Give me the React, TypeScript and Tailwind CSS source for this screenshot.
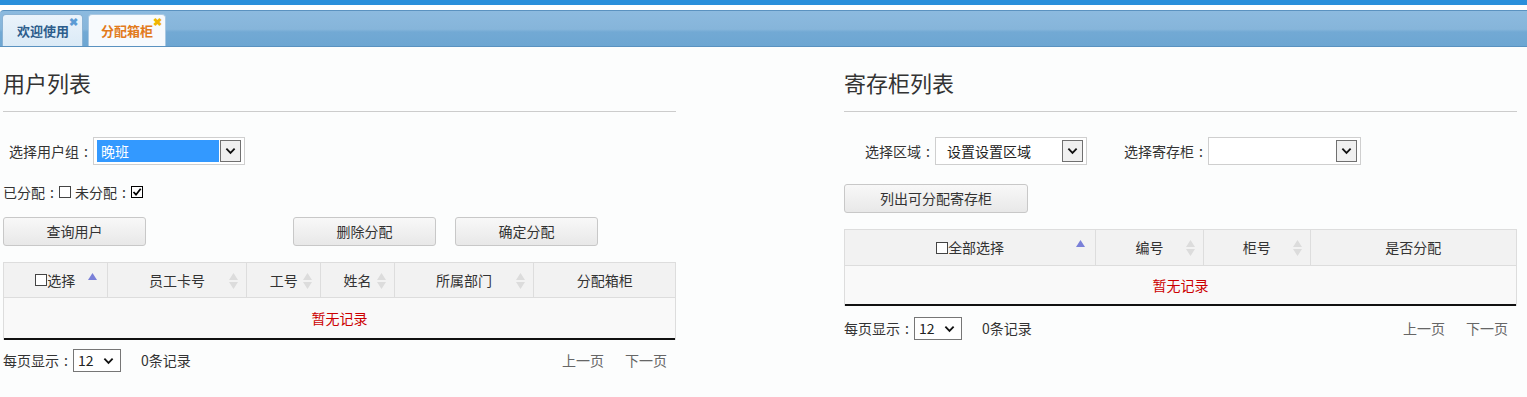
import React from 'react';

const font = { fontFamily: '"Noto Sans CJK SC", "Noto Sans", sans-serif' };

// 全角冒号居中显示
function Colon() {
  return <span className="inline-block w-[14px] text-center">:</span>;
}

function Chevron() {
  return (
    <svg viewBox="0 0 12 8" width="11" height="8">
      <path d="M1.5 1.5L6 6l4.5-4.5" fill="none" stroke="#111" strokeWidth={2} />
    </svg>
  );
}

function SortIcon({ active }: { active?: boolean }) {
  if (active) {
    return (
      <svg width="9" height="8" viewBox="0 0 9 8" className="absolute right-[10px] top-[10px]">
        <path d="M4.5 0L9 7H0z" fill="#7a80d8" />
      </svg>
    );
  }
  return (
    <svg width="9" height="16" viewBox="0 0 9 16" className="absolute right-[8px] top-[10px]">
      <path d="M4.5 0L9 7H0z" fill="#dcdcdc" />
      <path d="M0 9h9l-4.5 7z" fill="#dcdcdc" />
    </svg>
  );
}

function Box({ checked }: { checked?: boolean }) {
  return (
    <span
      className={`inline-flex items-center justify-center w-[12px] h-[12px] border ${
        checked ? 'border-black' : 'border-[#444]'
      } bg-white align-middle`}
    >
      {checked && (
        <svg width="10" height="10" viewBox="0 0 10 10">
          <path d="M1.5 5l2.5 2.7L8.7 1.8" fill="none" stroke="#000" strokeWidth={1.8} />
        </svg>
      )}
    </span>
  );
}

function IeSelect({ value, width, highlight }: { value: string; width: number; highlight?: boolean }) {
  return (
    <div
      className="flex items-center h-[28px] border border-[#cfcfcf] bg-white px-[3px] gap-[1px]"
      style={{ width }}
    >
      <div
        className={`flex-1 h-[22px] flex items-center px-[4px] text-[14px] ${
          highlight ? 'bg-[#3399ff] text-white' : 'text-[#222] pl-[8px]'
        }`}
      >
        {value}
      </div>
      <div className="w-[21px] h-[22px] border border-[#707070] bg-[#f0f0f0] flex items-center justify-center">
        <Chevron />
      </div>
    </div>
  );
}

function PageSelect() {
  return (
    <div className="flex items-center justify-between w-[48px] h-[23px] border border-[#767676] bg-white pl-[4px] pr-[6px] text-[14px] text-[#222]">
      <span>12</span>
      <Chevron />
    </div>
  );
}

function Btn({ children, w }: { children: React.ReactNode; w: number }) {
  return (
    <div
      className="h-[29px] flex items-center justify-center rounded-[3px] border border-[#c8c8c8] bg-[linear-gradient(to_bottom,#f8f8f8,#e8e8e8)] text-[14px] text-[#333]"
      style={{ width: w }}
    >
      {children}
    </div>
  );
}

type Col = { title: React.ReactNode; w: number; sort?: 'active' | 'idle' };

function DataTable({ cols, headH, bodyH }: { cols: Col[]; headH: number; bodyH: number }) {
  return (
    <div className="border border-[#dddddd] border-b-0">
      <div className="flex bg-[#f2f2f2] border-b border-[#dddddd]" style={{ height: headH }}>
        {cols.map((c, i) => (
          <div
            key={i}
            className={`relative flex items-center justify-center text-[14px] text-[#333] ${
              i < cols.length - 1 ? 'border-r border-[#dddddd]' : ''
            }`}
            style={{ width: c.w }}
          >
            {c.title}
            {c.sort && <SortIcon active={c.sort === 'active'} />}
          </div>
        ))}
      </div>
      <div
        className="flex items-center justify-center bg-[#f9f9f9] border-b-2 border-[#111] text-[14px] text-[#cc0000]"
        style={{ height: bodyH }}
      >
        暂无记录
      </div>
    </div>
  );
}

function Footer({ mt }: { mt: number }) {
  return (
    <div className="flex items-center text-[14px] text-[#333]" style={{ marginTop: mt }}>
      <span>每页显示<Colon /></span>
      <PageSelect />
      <span className="ml-[20px]">0条记录</span>
      <div className="ml-auto flex gap-[21px] pr-[9px] text-[#666]">
        <span>上一页</span>
        <span>下一页</span>
      </div>
    </div>
  );
}

function Title({ text }: { text: string }) {
  return (
    <div className="pt-[20px]">
      <div className="h-[30px] text-[22px] leading-[30px] text-[#333]">{text}</div>
      <div className="mt-[14px] h-px bg-[#cccccc]" />
    </div>
  );
}

export default function App() {
  return (
    <div className="w-full h-[397px] bg-[#fcfdfd] overflow-hidden" style={font}>
      <div className="h-[5px] bg-[#2a8fdb]" />
      <div className="h-[5px] bg-white" />
      <div className="h-[37px] border-y border-[#5a92c0] rounded-tl-[4px] bg-[linear-gradient(to_bottom,#8cbadf_0%,#86b5da_52%,#72a9d4_60%,#6da6d2_100%)] flex items-end pl-[2px] gap-[5px]">
        <div className="relative h-[32px] w-[81px] rounded-t-[4px] border border-b-0 border-[#8ab2d4] bg-[linear-gradient(to_bottom,#eaf3fb,#dbeaf6)] flex items-center pl-[14px] text-[13px] font-bold text-[#2d5d8c]">
          欢迎使用
          <span className="absolute left-[66px] top-[1px] text-[11px] leading-none text-[#5b9bd5]">✖</span>
        </div>
        <div className="relative h-[32px] w-[78px] rounded-t-[4px] border border-b-0 border-[#a9c8e2] bg-[#f7fafd] flex items-center pl-[12px] text-[13px] font-bold text-[#e27a1c]">
          分配箱柜
          <span className="absolute left-[64px] top-[1px] text-[11px] leading-none text-[#f0b400]">✖</span>
        </div>
      </div>

      <div className="flex">
        {/* 用户列表 */}
        <div className="ml-[3px] w-[673px]">
          <Title text="用户列表" />
          <div className="mt-[25px] flex items-center text-[14px] text-[#333]">
            <span className="ml-[6px] w-[84px]">选择用户组<Colon /></span>
            <IeSelect value="晚班" width={152} highlight />
          </div>
          <div className="mt-[17px] h-[20px] flex items-center text-[14px] text-[#333]">
            <span>已分配<Colon /></span>
            <Box />
            <span className="ml-[4px]">未分配<Colon /></span>
            <Box checked />
          </div>
          <div className="mt-[15px] flex">
            <Btn w={143}>查询用户</Btn>
            <div className="ml-[147px]">
              <Btn w={143}>删除分配</Btn>
            </div>
            <div className="ml-[19px]">
              <Btn w={143}>确定分配</Btn>
            </div>
          </div>
          <div className="mt-[16px]">
            <DataTable
              headH={35}
              bodyH={42}
              cols={[
                { title: <span className="flex items-center"><Box />选择</span>, w: 104, sort: 'active' },
                { title: '员工卡号', w: 140, sort: 'idle' },
                { title: '工号', w: 74, sort: 'idle' },
                { title: '姓名', w: 74, sort: 'idle' },
                { title: '所属部门', w: 140, sort: 'idle' },
                { title: '分配箱柜', w: 141 },
              ]}
            />
          </div>
          <Footer mt={9} />
        </div>

        {/* 寄存柜列表 */}
        <div className="ml-[168px] w-[673px]">
          <Title text="寄存柜列表" />
          <div className="mt-[25px] flex items-center text-[14px] text-[#333]">
            <span className="ml-[21px] w-[70px]">选择区域<Colon /></span>
            <IeSelect value="设置设置区域" width={152} />
            <span className="ml-[37px] w-[84px]">选择寄存柜<Colon /></span>
            <IeSelect value="" width={153} />
          </div>
          <div className="mt-[19px]">
            <Btn w={184}>列出可分配寄存柜</Btn>
          </div>
          <div className="mt-[16px]">
            <DataTable
              headH={36}
              bodyH={40}
              cols={[
                { title: <span className="flex items-center"><Box />全部选择</span>, w: 252, sort: 'active' },
                { title: '编号', w: 108, sort: 'idle' },
                { title: '柜号', w: 107, sort: 'idle' },
                { title: '是否分配', w: 206 },
              ]}
            />
          </div>
          <Footer mt={11} />
        </div>
      </div>
    </div>
  );
}
